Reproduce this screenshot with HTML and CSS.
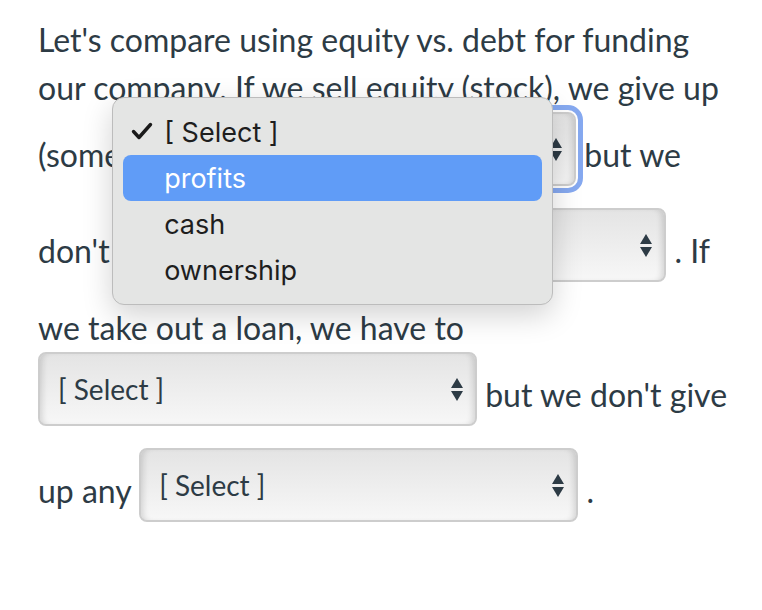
FILE: index.html
```html
<!DOCTYPE html>
<html lang="en">
<head>
  <meta charset="UTF-8">
  <title>Equity vs. Debt</title>
  <meta name="viewport" content="width=device-width, initial-scale=1.0">
  <link rel="stylesheet" href="styles.css">
</head>
<body>
  <div class="question">
    Let's compare using equity vs. debt for funding our company. If we sell equity (stock), we give up (some)
    <span class="select focused" role="combobox" aria-expanded="true">
      <span class="select-text">[ Select ]</span>
      <svg class="arrows" width="12" height="23" viewBox="0 0 12 23"><polygon points="0,10 6,0 12,10"/><polygon points="0,13 6,23 12,13"/></svg>
      <span class="menu" role="listbox">
        <span class="option checked">
          <svg class="check" width="22" height="18" viewBox="0 0 22 18"><path d="M2.5 9.5 L8 15.5 L19.5 2.5" fill="none" stroke="#1a1a1a" stroke-width="3.4" stroke-linecap="round" stroke-linejoin="round"/></svg>
          [ Select ]
        </span>
        <span class="option active">profits</span>
        <span class="option">cash</span>
        <span class="option">ownership</span>
      </span>
    </span>
    but we don't give up
    <span class="select" role="combobox">
      <span class="select-text">[ Select ]</span>
      <svg class="arrows" width="12" height="23" viewBox="0 0 12 23"><polygon points="0,10 6,0 12,10"/><polygon points="0,13 6,23 12,13"/></svg>
    </span>
    . If we take out a loan, we have to
    <span class="select" role="combobox">
      <span class="select-text">[ Select ]</span>
      <svg class="arrows" width="12" height="23" viewBox="0 0 12 23"><polygon points="0,10 6,0 12,10"/><polygon points="0,13 6,23 12,13"/></svg>
    </span>
    but we don't give up any
    <span class="select" role="combobox">
      <span class="select-text">[ Select ]</span>
      <svg class="arrows" width="12" height="23" viewBox="0 0 12 23"><polygon points="0,10 6,0 12,10"/><polygon points="0,13 6,23 12,13"/></svg>
    </span>
    .
  </div>
</body>
</html>
```

FILE: styles.css
```css
body {
  margin: 0;
  background: #ffffff;
  color: #2d3b45;
  font-family: Lato, "Open Sans", sans-serif;
}
.question {
  width: 700px;
  padding: 16px 0 0 38px;
  font-size: 32px;
  line-height: 48px;
}
.select {
  position: relative;
  display: inline-flex;
  align-items: center;
  justify-content: space-between;
  box-sizing: border-box;
  width: 439px;
  height: 74px;
  padding: 0 12px 0 18px;
  margin-bottom: 22px;
  vertical-align: 7px;
  border: 2px solid #cdcdcd;
  border-radius: 8px;
  background: linear-gradient(#e4e4e4, #f7f7f7);
  box-shadow: inset 6px 0 6px -4px rgba(0, 0, 0, 0.14), inset -6px 0 6px -4px rgba(0, 0, 0, 0.14);
  font-size: 28px;
  line-height: normal;
  color: #2d3b45;
}
.select.focused {
  outline: 5px solid #86a9f0;
  outline-offset: 2px;
}
.arrows {
  fill: #2d3b45;
}
.menu {
  position: absolute;
  left: -27px;
  top: -17px;
  z-index: 2;
  display: block;
  box-sizing: border-box;
  width: 441px;
  padding: 11px 10px;
  background: #e4e5e4;
  border: 1px solid #bcbcbc;
  border-radius: 12px;
  box-shadow: 0 10px 30px rgba(0, 0, 0, 0.18);
  font-family: Inter, "Noto Sans", sans-serif;
  font-size: 27px;
  color: #1e1e1e;
}
.option {
  position: relative;
  display: flex;
  align-items: center;
  height: 46px;
  padding-left: 41px;
  border-radius: 8px;
  line-height: 1;
}
.option.active {
  background: #609cf7;
  color: #ffffff;
}
.check {
  position: absolute;
  left: 8px;
  top: 13px;
}
```
